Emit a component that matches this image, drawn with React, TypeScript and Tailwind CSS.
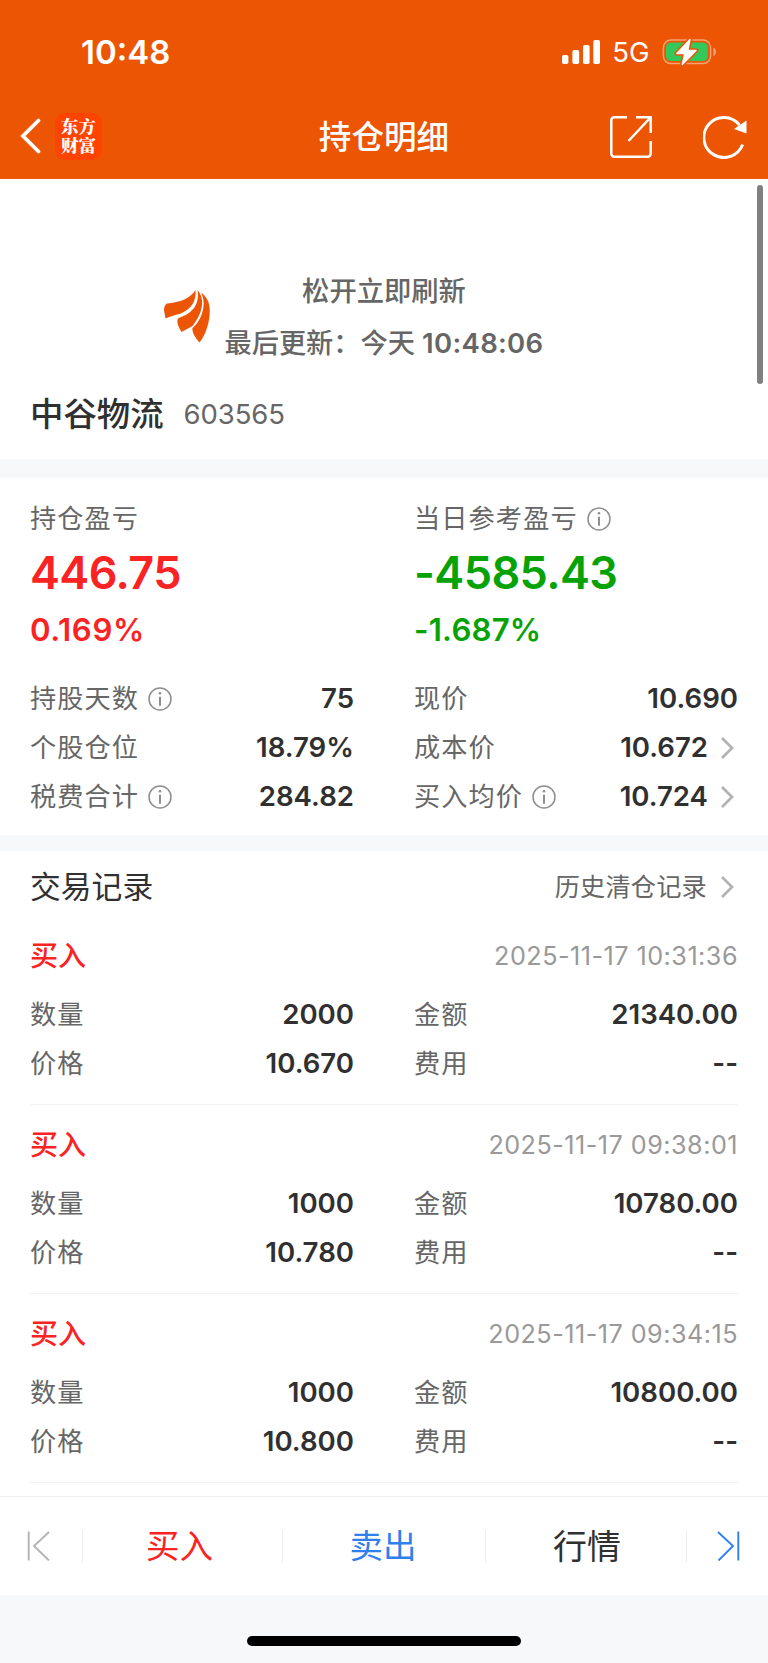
import type { ReactNode } from 'react';

const INFO_TEXT = 'text-[26.2px] tracking-[1.1px] text-[#666]';

function InfoIcon() {
  return (
    <svg className="ml-[9px] size-6 shrink-0" viewBox="0 0 24 24" fill="none" stroke="#8e8e8e">
      <circle cx="12" cy="12" r="11" strokeWidth="1.5" />
      <path d="M12 9.7v9" strokeWidth="2" />
      <circle cx="12" cy="6.3" r="1.3" fill="#8e8e8e" stroke="none" />
    </svg>
  );
}

function Chevron() {
  return (
    <svg className="mr-[4px] ml-[13px] h-[22px] w-[13px] shrink-0" viewBox="0 0 13 22" fill="none" stroke="#b3b3b3" strokeWidth="2.8">
      <path d="M1 1l10 10L1 21" />
    </svg>
  );
}

function Row({ label, value, info, link }: { label: string; value: string; info?: boolean; link?: boolean }) {
  return (
    <div className="flex h-[49px] items-center">
      <span className={`pt-px ${INFO_TEXT}`}>{label}</span>
      {info && <InfoIcon />}
      <span className="ml-auto text-[27.6px] font-semibold text-[#303030]">{value}</span>
      {link && <Chevron />}
    </div>
  );
}

function Columns({ children }: { children: ReactNode }) {
  return <div className="grid grid-cols-2 gap-x-[60px] px-[30px]">{children}</div>;
}

interface Trade {
  time: string;
  qty: string;
  amount: string;
  price: string;
}

const trades: Trade[] = [
  { time: '2025-11-17 10:31:36', qty: '2000', amount: '21340.00', price: '10.670' },
  { time: '2025-11-17 09:38:01', qty: '1000', amount: '10780.00', price: '10.780' },
  { time: '2025-11-17 09:34:15', qty: '1000', amount: '10800.00', price: '10.800' },
];

function TradeItem({ trade }: { trade: Trade }) {
  return (
    <div className="h-[189px]">
      <div className="flex h-[68px] items-center justify-between px-[30px] pt-[5px]">
        <span className="text-[28px] font-medium text-[#f92323]">买入</span>
        <span className="pt-[2px] text-[25.2px] tracking-[0.48px] text-[#999]">{trade.time}</span>
      </div>
      <div className="pt-[3px]">
        <Columns>
          <Row label="数量" value={trade.qty} />
          <Row label="金额" value={trade.amount} />
          <Row label="价格" value={trade.price} />
          <Row label="费用" value="--" />
        </Columns>
      </div>
      <div className="mx-[30px] mt-[16px] h-px bg-[#f2f3f4]" />
    </div>
  );
}

function StatusBar() {
  return (
    <div className="flex h-[102px] items-center justify-between pt-px pr-[51px] pl-[81px]">
      <span className="pt-px text-[33px] font-semibold">10:48</span>
      <div className="flex items-center">
        <svg className="h-6 w-[38px]" viewBox="0 0 38 24" fill="white">
          <rect x="0" y="15" width="6.4" height="9" rx="1.8" />
          <rect x="10.4" y="10" width="6.8" height="14" rx="1.8" />
          <rect x="21" y="5" width="6.6" height="19" rx="1.8" />
          <rect x="31.3" y="0" width="6.7" height="24" rx="1.8" />
        </svg>
        <span className="mx-[12.5px] pt-[2px] text-[27.5px]">5G</span>
        <svg className="h-[28px] w-[55px]" viewBox="0 0 55 28" fill="none">
          <rect x="1.4" y="2" width="47.2" height="23.6" rx="7.5" stroke="#f5a377" strokeWidth="1.5" />
          <rect x="3.9" y="4.5" width="42" height="18.6" rx="5" fill="#34c759" />
          <path d="M51.4 9.5c3.3 1.4 3.3 7.2 0 8.6z" fill="#f5a377" />
          <path d="M28 1.500L14.800 15.500h8L20.300 26.500L34 12.500h-8.300z" fill="#eb5503" stroke="#eb5503" strokeWidth="4.6" strokeLinejoin="round" />
          <path d="M28 1.500L14.800 15.500h8L20.300 26.500L34 12.500h-8.300z" fill="white" stroke="white" strokeWidth="1.4" strokeLinejoin="round" />
        </svg>
      </div>
    </div>
  );
}

function NavBar() {
  return (
    <div className="grid h-[77px] grid-cols-3 items-center pb-[9px]">
      <div className="flex items-center pl-[20px]">
        <svg className="h-9 w-[22px]" viewBox="0 0 22 36" fill="none" stroke="white" strokeWidth="3.8" strokeLinecap="round">
          <path d="M18.5 2.5L3 18l15.5 15.5" />
        </svg>
        <div className="ml-[13px] flex size-[47px] items-center justify-center rounded-[10px] bg-[#ff4300] pb-[2px]">
          <span className="w-[36px] text-center font-['Noto_Serif_CJK_SC','Noto_Sans_CJK_SC',serif] text-[17.5px] leading-[19.5px] font-black break-all">东方财富</span>
        </div>
      </div>
      <h1 className="pt-[3px] text-center text-[32.6px] font-medium">持仓明细</h1>
      <div className="flex items-center justify-end pt-px pr-[21px]">
        <svg className="size-[42px]" viewBox="0 0 42 42" fill="none" stroke="white" strokeWidth="2.5">
          <path d="M17 1.3H4.2A2.9 2.9 0 0 0 1.3 4.2v33.6a2.9 2.9 0 0 0 2.9 2.9h33.6a2.9 2.9 0 0 0 2.9-2.9V25M26 1.3h14.7V17M40 2L18.5 25" />
        </svg>
        <svg className="ml-[51px] size-[44px]" viewBox="0 0 44 44" fill="none">
          <path d="M39.6 29.5A20 20 0 1 1 36.5 10" stroke="white" strokeWidth="3" />
          <path d="M43.5 5.5v13L31 14z" fill="white" />
        </svg>
      </div>
    </div>
  );
}

function RefreshBanner() {
  return (
    <div className="relative flex h-[189px] flex-col items-center pt-[87px]">
      <svg className="absolute top-[111px] left-[164px] h-[53px] w-[46px]" viewBox="0 0 46 53" preserveAspectRatio="none" fill="#eb5503">
        <path d="M31.5 0C27 8 16 12.5 3 13.5Q0 15 0 20L1.5 28.500Q7 26 17 23.5Q33 16 31.5 0Z" />
        <path d="M33.5 0C36 16 27 24 14.5 28Q12.5 30 14 35Q15 38 17.5 42L28.5 36C38 24 42 10 33.5 0Z" />
        <path d="M37 2.500C43 14 38 30 28.5 38Q27.500 44 35.500 52.500C45 41 48 20 44 11Q41 5 37 2.500Z" />
      </svg>
      <p className="flex h-[53px] items-center text-[27.3px] font-medium text-[#666]">松开立即刷新</p>
      <p className="flex h-[53px] items-center pt-[3px] text-[27.2px] font-medium whitespace-pre text-[#666]">
        最后更新：今天 <span className="text-[27.5px] font-semibold tracking-[0.3px]">10:48:06</span>
      </p>
    </div>
  );
}

function Divider() {
  return <span className="h-[33px] w-px bg-[#eeeff1]" />;
}

export default function App() {
  return (
    <div className="flex h-[1663px] w-[768px] flex-col overflow-hidden bg-white font-['Inter','Noto_Sans_CJK_SC',sans-serif] leading-none">
      <header className="h-[179px] shrink-0 bg-[#eb5503] text-white">
        <StatusBar />
        <NavBar />
      </header>
      <main className="relative h-[1317px] shrink-0 overflow-hidden">
        <div className="absolute top-[6px] right-[5.5px] h-[199px] w-[6px] rounded-full bg-[#808080]" />
        <RefreshBanner />
        <div className="flex h-[91px] items-center pt-[2px] pl-[30px]">
          <span className="text-[33.4px] font-medium text-[#303030]">中谷物流</span>
          <span className="ml-[20px] text-[27.5px] tracking-[-0.1px] text-[#666]">603565</span>
        </div>
        <div className="h-[19px] bg-[#f6f8fa]" />
        <section className="h-[357px] pt-[17px]">
          <Columns>
            <div className="h-[179px]">
              <div className={`flex h-[48px] items-center ${INFO_TEXT}`}>持仓盈亏</div>
              <div className="flex h-[58px] items-center text-[45px] font-semibold tracking-[-0.6px] text-[#f92323]">446.75</div>
              <div className="flex h-[60px] items-center text-[31.2px] font-semibold tracking-[0.6px] text-[#f92323]">0.169%</div>
            </div>
            <div className="h-[179px]">
              <div className={`flex h-[48px] items-center ${INFO_TEXT}`}>
                当日参考盈亏
                <InfoIcon />
              </div>
              <div className="flex h-[58px] items-center text-[45px] font-semibold tracking-[-0.6px] text-[#06a206]">-4585.43</div>
              <div className="flex h-[60px] items-center text-[31.2px] font-semibold tracking-[0.2px] text-[#06a206]">-1.687%</div>
            </div>
            <Row label="持股天数" value="75" info />
            <Row label="现价" value="10.690" />
            <Row label="个股仓位" value="18.79%" />
            <Row label="成本价" value="10.672" link />
            <Row label="税费合计" value="284.82" info />
            <Row label="买入均价" value="10.724" info link />
          </Columns>
        </section>
        <div className="h-[16px] bg-[#f6f8fa]" />
        <section>
          <div className="flex h-[68px] items-center justify-between px-[30px] pt-[4px]">
            <h2 className="text-[30.8px] text-[#303030]">交易记录</h2>
            <div className="flex items-center text-[25.2px] tracking-[0.2px] text-[#666]">
              <span className="pt-px pr-px">历史清仓记录</span>
              <Chevron />
            </div>
          </div>
          {trades.map((trade) => (
            <TradeItem key={trade.time} trade={trade} />
          ))}
        </section>
      </main>
      <nav className="flex h-[99px] shrink-0 items-center border-t border-[#eff0f1] text-[33.5px]">
        <div className="flex w-[82px] pl-[27px]">
          <svg className="h-[30px] w-[23px]" viewBox="0 0 23 30" fill="none" stroke="#b3b3b3" strokeWidth="1.9">
            <path d="M1.7 0.5v29M22 1L7 15l15 14.5" />
          </svg>
        </div>
        <Divider />
        <span className="w-[199px] pt-[2px] pr-[6px] text-center text-[#f92323]">买入</span>
        <Divider />
        <span className="w-[202px] pt-[2px] pr-[2px] text-center text-[#2f80ed]">卖出</span>
        <Divider />
        <span className="w-[200px] pt-[2px] pl-[2px] text-center text-[34px] text-[#303030]">行情</span>
        <Divider />
        <svg className="ml-[30px] h-[30px] w-[23px]" viewBox="0 0 23 30" fill="none" stroke="#2f80ed" strokeWidth="1.9">
          <path d="M21.3 0.5v29M1 1l15 14L1.5 29.500" />
        </svg>
      </nav>
      <footer className="flex h-[68px] shrink-0 justify-center bg-[#f6f8fa] pt-[41px]">
        <div className="h-[10px] w-[274px] rounded-full bg-black" />
      </footer>
    </div>
  );
}
